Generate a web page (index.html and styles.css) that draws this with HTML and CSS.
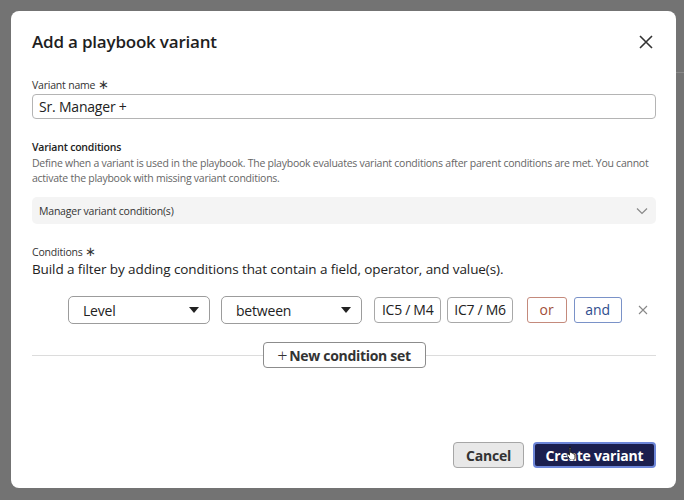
FILE: index.html
```html
<!DOCTYPE html>
<html>
<head>
<meta charset="utf-8">
<link rel="stylesheet" href="styles.css">
</head>
<body>
<div class="page">
  <div class="modal">
    <div class="head">
      <h1 class="title">Add a playbook variant</h1>
      <button class="close" aria-label="Close">
        <svg width="14" height="14" viewBox="0 0 14 14"><path d="M1 1L13 13M13 1L1 13" stroke="#333" stroke-width="1.6" fill="none"/></svg>
      </button>
    </div>

    <div class="label lbl-name">Variant name <span class="req">∗</span></div>
    <div class="input">Sr. Manager +</div>

    <div class="section-title">Variant conditions</div>
    <p class="desc">Define when a variant is used in the playbook. The playbook evaluates variant conditions after parent conditions are met. You cannot activate the playbook with missing variant conditions.</p>

    <div class="accordion">
      <span>Manager variant condition(s)</span>
      <svg width="12" height="8" viewBox="0 0 12 8"><path d="M1 1.5L6 6.5L11 1.5" stroke="#888" stroke-width="1.2" fill="none"/></svg>
    </div>

    <div class="label lbl-cond">Conditions <span class="req">∗</span></div>
    <div class="hint">Build a filter by adding conditions that contain a field, operator, and value(s).</div>

    <div class="row">
      <div class="select sel-field"><span>Level</span><i class="caret"></i></div>
      <div class="select sel-op"><span>between</span><i class="caret"></i></div>
      <div class="chip">IC5 / M4</div>
      <div class="chip">IC7 / M6</div>
      <div class="logic or">or</div>
      <div class="logic and">and</div>
      <svg class="remove" width="10" height="10" viewBox="0 0 10 10"><path d="M1 1L9 9M9 1L1 9" stroke="#888" stroke-width="1.1" fill="none"/></svg>
    </div>

    <div class="divider">
      <span class="line"></span>
      <button class="new-set"><span class="plus">+</span>New condition set</button>
      <span class="line"></span>
    </div>

    <div class="footer">
      <button class="btn cancel">Cancel</button>
      <button class="btn primary">Create variant
        <svg class="cursor" width="12" height="14" viewBox="0 0 12 14"><path d="M3.5 1.2c.7 0 1.1.5 1.1 1.1v4.2l.5-.1c.6 0 1 .4 1 .9l.5-.1c.6 0 1 .4 1 .9l.4-.1c.6 0 1 .4 1 1v2.6c0 1.4-1 2.6-2.6 2.6H5.5c-.8 0-1.4-.4-1.900-1L1.3 9.6c-.4-.5-.3-1.1.2-1.4.4-.3 1-.2 1.3.2l.6.8V2.3c0-.6.4-1.1 1.1-1.1z" fill="#fff" stroke="#111" stroke-width="0.9"/></svg>
      </button>
    </div>
  </div>
</div>
</body>
</html>
```

FILE: styles.css
```css
* { box-sizing: border-box; }
html, body { margin: 0; padding: 0; }
body {
  width: 684px;
  height: 500px;
  overflow: hidden;
  background:
    linear-gradient(#8a8a8a, #8a8a8a) 676px 72px / 8px 1px no-repeat,
    #737373;
  font-family: "Open Sans", "Noto Sans", sans-serif;
  color: #222;
}
.page {
  padding: 11px 8px 12px 11px;
}
.modal {
  width: 665px;
  height: 477px;
  background: #fff;
  border-radius: 8px;
  padding: 19px 20px 0 21px;
  display: flex;
  flex-direction: column;
}
.head {
  display: flex;
  align-items: center;
  justify-content: space-between;
  height: 24px;
}
.title {
  margin: 0;
  font-size: 17px;
  font-weight: 600;
  color: #1e1e1e;
  line-height: 24px;
  letter-spacing: -0.2px;
}
.close {
  border: 0;
  background: none;
  padding: 0;
  width: 14px;
  height: 14px;
  margin-right: 3px;
  display: flex;
}
.label {
  font-size: 10.5px;
  line-height: 14px;
  color: #333;
  letter-spacing: -0.2px;
}
.req { font-size: 13px; color: #333; }
.lbl-name { margin-top: 23px; }
.input {
  margin-top: 2px;
  height: 25px;
  border: 1px solid #b4b4b4;
  border-radius: 4px;
  font-size: 14px;
  line-height: 23px;
  padding-left: 6px;
  color: #222;
  letter-spacing: -0.2px;
}
.section-title {
  margin-top: 21px;
  font-size: 10.5px;
  font-weight: 600;
  line-height: 15px;
  color: #222;
  letter-spacing: -0.2px;
}
.desc {
  margin: 1px 0 0;
  font-size: 10.5px;
  line-height: 15px;
  color: #666;
  letter-spacing: -0.25px;
}
.accordion {
  margin-top: 11px;
  height: 27px;
  background: #f4f4f4;
  border-radius: 5px;
  display: flex;
  align-items: center;
  justify-content: space-between;
  padding: 0 8px 0 7px;
  font-size: 10.5px;
  color: #333;
  letter-spacing: -0.2px;
}
.lbl-cond { margin-top: 20px; }
.hint {
  margin-top: 1px;
  font-size: 13.5px;
  line-height: 19px;
  color: #222;
  letter-spacing: -0.1px;
}
.row {
  margin-top: 17px;
  margin-left: 36px;
  display: flex;
  align-items: center;
  height: 28px;
}
.select {
  height: 28px;
  border: 1px solid #9c9c9c;
  border-radius: 5px;
  display: flex;
  align-items: center;
  justify-content: space-between;
  padding: 0 10px 0 14px;
  font-size: 14px;
  color: #222;
  letter-spacing: -0.2px;
}
.sel-field { width: 142px; }
.sel-op { width: 141px; margin-left: 11px; }
.caret {
  width: 0; height: 0;
  border-left: 5px solid transparent;
  border-right: 5px solid transparent;
  border-top: 6px solid #222;
}
.chip {
  height: 26px;
  border: 1px solid #a8a8a8;
  border-radius: 4px;
  font-size: 14px;
  line-height: 24px;
  padding: 0 7px;
  color: #222;
  letter-spacing: -0.3px;
}
.sel-op + .chip { margin-left: 12px; }
.chip + .chip { margin-left: 6px; padding: 0 6px; }
.logic {
  height: 26px;
  border-radius: 3px;
  font-size: 14px;
  line-height: 24px;
  text-align: center;
}
.or {
  margin-left: 14px;
  width: 40px;
  border: 1px solid #c48a7c;
  color: #a24e38;
}
.and {
  margin-left: 7px;
  width: 48px;
  border: 1px solid #7a92c8;
  color: #2f4d8e;
}
.remove { margin-left: 16px; }
.divider {
  margin-top: 18px;
  display: flex;
  align-items: center;
}
.line { flex: 1; height: 1px; background: #dcdcdc; }
.new-set {
  width: 163px;
  height: 26px;
  border: 1px solid #8c8c8c;
  border-radius: 4px;
  background: #fff;
  font-family: inherit;
  font-size: 14px;
  font-weight: 700;
  color: #333;
  padding: 0;
  display: flex;
  align-items: center;
  justify-content: center;
  letter-spacing: -0.3px;
}
.plus { font-weight: 300; font-size: 18px; margin-right: 2px; line-height: 1; }
.footer {
  margin-top: auto;
  margin-bottom: 20px;
  display: flex;
  justify-content: flex-end;
  gap: 9px;
}
.btn {
  height: 26px;
  border-radius: 4px;
  font-family: inherit;
  font-size: 14px;
  font-weight: 700;
  padding: 0;
  letter-spacing: -0.2px;
}
.cancel {
  width: 71px;
  background: #e8e8e8;
  border: 1px solid #a6a6a6;
  color: #333;
}
.primary {
  position: relative;
  width: 123px;
  background: #1b1f4e;
  border: 2px solid #6d86d8;
  color: #fff;
}
.cursor {
  position: absolute;
  left: 31px;
  top: 2px;
}
```
